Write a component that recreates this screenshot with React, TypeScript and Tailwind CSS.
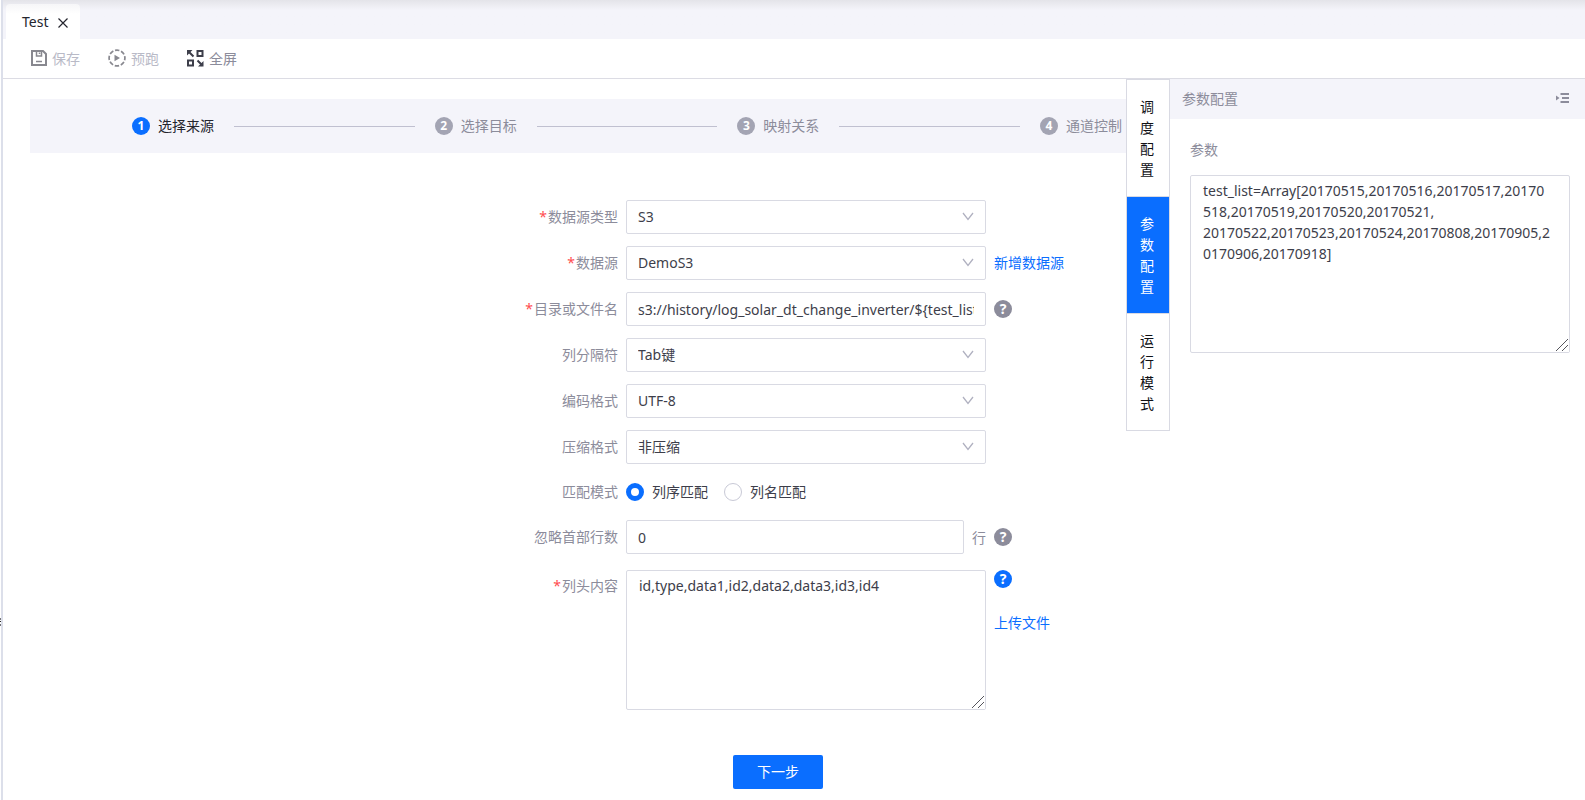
import React, { useState } from "react";

const STEPS = ["选择来源", "选择目标", "映射关系", "通道控制"];
const SIDE_TABS = ["调度配置", "参数配置", "运行模式"];

const PARAMS =
  "test_list=Array[20170515,20170516,20170517,20170518,20170519,20170520,20170521,\n20170522,20170523,20170524,20170808,20170905,20170906,20170918]";

const boxClass =
  "block border border-[#d9dae3] rounded-xs bg-white text-[#3d3e4a] outline-none focus:border-[#0a6eff]";

function SaveIcon() {
  return (
    <svg width="16" height="16" viewBox="0 0 16 16" fill="none" stroke="#88888f" strokeWidth="2">
      <path d="M1 1h11l3 3v11H1z" />
      <path d="M5.500 1v5h5V1M8.500 2.500v1.500M5 11.500h6" strokeWidth="1.500" />
    </svg>
  );
}

function PreRunIcon() {
  return (
    <svg width="18" height="18" viewBox="0 0 18 18" fill="none">
      <circle cx="9" cy="9" r="7.900" stroke="#88888f" strokeWidth="1.700" strokeDasharray="4.400 1.800" strokeDashoffset="2.200" />
      <path d="M6.500 5.700v6.600L12 9z" fill="#88888f" />
    </svg>
  );
}

function FullScreenIcon() {
  return (
    <svg width="17" height="17" viewBox="0 0 17 17" fill="none" stroke="#3d3e4a" strokeWidth="2">
      <path d="M10.500 1h5v5h-5zM1 10.500h5v5H1z" />
      <path d="M1.500 1.500l5 5M10.500 10.500l5 5" />
      <path d="M0 0h5.500L0 5.500zM16.500 11v5.500H11z" fill="#3d3e4a" stroke="none" />
    </svg>
  );
}

function Chevron() {
  return (
    <svg
      className="absolute right-3 top-3 pointer-events-none"
      width="12"
      height="9"
      viewBox="0 0 12 9"
      fill="none"
      stroke="#b0b1c0"
      strokeWidth="1.300"
    >
      <path d="M1 1l5 6.500L11 1" />
    </svg>
  );
}

function Help({ active }: { active?: boolean }) {
  return (
    <button
      type="button"
      aria-label="帮助"
      className={
        active
          ? "w-[18px] h-[18px] rounded-full bg-[#0a6eff] text-white text-sm leading-[18px] font-bold text-center shrink-0"
          : "w-[18px] h-[18px] rounded-full bg-[#8c8c9b] text-white text-sm leading-[18px] font-bold text-center shrink-0"
      }
    >
      ?
    </button>
  );
}

function Label({ id, text, required }: { id?: string; text: string; required?: boolean }) {
  return (
    <label htmlFor={id} className="block w-[100px] pb-0.5 shrink-0 text-right text-[#8c8c9b] whitespace-nowrap">
      {required && <span className="text-[#ff4d4f] mr-px">*</span>}
      {text}
    </label>
  );
}

function SelectRow(props: { id: string; label: string; value: string; required?: boolean; children?: React.ReactNode }) {
  return (
    <div className="flex items-center gap-2 mb-3">
      <Label id={props.id} text={props.label} required={props.required} />
      <div className="relative w-[360px] shrink-0">
        <select id={props.id} className={`${boxClass} appearance-none w-full h-[34px] px-[11px] pb-0.5`}>
          <option>{props.value}</option>
        </select>
        <Chevron />
      </div>
      {props.children}
    </div>
  );
}

function TextArea({ id, value, className }: { id: string; value: string; className: string }) {
  return (
    <div className="relative shrink-0">
      <textarea id={id} className={`${boxClass} ${className} pl-3 pr-[18px] py-1 break-all resize`} defaultValue={value} />
      <svg
        className="absolute right-px bottom-px pointer-events-none bg-white"
        width="15"
        height="15"
        viewBox="0 0 15 15"
        stroke="#55555c"
      >
        <path d="M2 14L14 2M8 14l6-6" />
      </svg>
    </div>
  );
}

export default function App() {
  const [mode, setMode] = useState("index");
  const [tab, setTab] = useState(1);

  return (
    <div
      className="min-h-screen flex text-sm leading-[21px] bg-white overflow-hidden"
      style={{ fontFamily: '"Noto Sans", "Noto Sans CJK SC", sans-serif' }}
    >
      <div className="w-px shrink-0 pt-[618px]">
        <svg width="1" height="8" viewBox="0 0 1 8" className="block">
          <path d="M0 0h1v2H0zM0 6h1v2H0z" fill="#77777c" />
          <path d="M0 3h1v1H0z" fill="#222" />
        </svg>
      </div>
      <div className="w-0.5 shrink-0 bg-[#dcdfea]"></div>
      <div className="flex-1 min-w-0 flex flex-col">
        <div className="h-[39px] shrink-0 flex items-end pl-[3px] bg-linear-to-b from-[#e4e4e9] to-[#f4f4fa] to-[10px]">
          <div className="h-[35px] flex items-center gap-2.5 pl-4 pr-3 rounded-t bg-linear-to-b from-[#f6f6f8] to-white to-[10px] text-[#24252e]">
            <span>Test</span>
            <button type="button" aria-label="关闭">
              <svg width="10" height="10" viewBox="0 0 10 10" stroke="#24252e" strokeWidth="1.200" className="mt-0.5">
                <path d="M.5.5l9 9M9.500.5l-9 9" />
              </svg>
            </button>
          </div>
        </div>

        <div className="h-10 shrink-0 flex items-center gap-7 pl-7 pb-px border-b border-[#dcdce4]">
          <button type="button" className="flex items-center gap-[5px] text-[#b9bac7]">
            <SaveIcon />
            保存
          </button>
          <button type="button" className="flex items-center gap-[5px] text-[#b9bac7]">
            <PreRunIcon />
            预跑
          </button>
          <button type="button" className="flex items-center gap-[5px] text-[#8c8c9b]">
            <FullScreenIcon />
            全屏
          </button>
        </div>

        <div className="flex-1 flex">
          <main className="flex-1 min-w-0 pl-[27px] pt-5">
            <ol className="h-[54px] flex items-center bg-[#f4f4fa] pl-[102px] pr-1">
              {STEPS.map((s, i) => (
                <li key={s} className={i < 3 ? "flex flex-1 items-center" : "flex items-center"}>
                  <span
                    className={
                      i === 0
                        ? "w-[18px] h-[18px] rounded-full bg-[#0a6eff] text-white text-xs leading-[18px] font-bold text-center shrink-0"
                        : "w-[18px] h-[18px] rounded-full bg-[#a3a4b3] text-white text-xs leading-[18px] font-bold text-center shrink-0"
                    }
                  >
                    {i + 1}
                  </span>
                  <span
                    className={
                      i === 0
                        ? "ml-2 pb-0.5 text-[#24252e] whitespace-nowrap"
                        : "ml-2 pb-0.5 text-[#8c8c9b] whitespace-nowrap"
                    }
                  >
                    {s}
                  </span>
                  {i < 3 && <span className="flex-1 h-px mx-5 bg-[#c0c0d0]"></span>}
                </li>
              ))}
            </ol>

            <form className="w-[546px] ml-auto mr-[62px] pt-[47px]" onSubmit={(e) => e.preventDefault()}>
              <SelectRow id="type" label="数据源类型" value="S3" required />
              <SelectRow id="source" label="数据源" value="DemoS3" required>
                <a href="#" className="pb-0.5 text-[#0a6eff] whitespace-nowrap">新增数据源</a>
              </SelectRow>
              <div className="flex items-center gap-2 mb-3">
                <Label id="path" text="目录或文件名" required />
                <input
                  id="path"
                  className={`${boxClass} w-[360px] h-[34px] px-[11px]`}
                  defaultValue="s3://history/log_solar_dt_change_inverter/${test_list}"
                />
                <Help />
              </div>
              <SelectRow id="separator" label="列分隔符" value="Tab键" />
              <SelectRow id="encoding" label="编码格式" value="UTF-8" />
              <SelectRow id="compress" label="压缩格式" value="非压缩" />

              <div className="flex items-center gap-2 h-8 mb-3" role="radiogroup" aria-label="匹配模式">
                <span className="w-[100px] pb-0.5 text-right text-[#8c8c9b]">匹配模式</span>
                <label className="flex items-center gap-2 mr-2 text-[#3d3e4a]">
                  <input
                    type="radio"
                    name="mode"
                    checked={mode === "index"}
                    onChange={() => setMode("index")}
                    className="appearance-none w-[18px] h-[18px] rounded-full border border-[#c8c9d6] checked:border-5 checked:border-[#0a6eff]"
                  />
                  <span className="pb-0.5">列序匹配</span>
                </label>
                <label className="flex items-center gap-2 text-[#3d3e4a]">
                  <input
                    type="radio"
                    name="mode"
                    checked={mode === "name"}
                    onChange={() => setMode("name")}
                    className="appearance-none w-[18px] h-[18px] rounded-full border border-[#c8c9d6] checked:border-5 checked:border-[#0a6eff]"
                  />
                  <span className="pb-0.5">列名匹配</span>
                </label>
              </div>

              <div className="flex items-center gap-2 mb-4">
                <Label id="skip" text="忽略首部行数" />
                <input id="skip" className={`${boxClass} w-[338px] h-[34px] px-[11px]`} defaultValue="0" />
                <span className="text-[#8c8c9b]">行</span>
                <Help />
              </div>

              <div className="flex gap-2">
                <div className="pt-[5px]">
                  <Label id="head" text="列头内容" required />
                </div>
                <TextArea id="head" className="w-[360px] h-[140px]" value="id,type,data1,id2,data2,data3,id3,id4" />
                <div className="flex flex-col items-start gap-6">
                  <Help active />
                  <a href="#" className="text-[#0a6eff] whitespace-nowrap">上传文件</a>
                </div>
              </div>

              <button
                type="submit"
                className="block w-[90px] h-[34px] pb-0.5 mt-[45px] ml-[215px] rounded-xs bg-[#0a6eff] text-white"
              >
                下一步
              </button>
            </form>
          </main>

          <aside className="flex shrink-0 items-start">
            <div className="w-11 border border-[#d9dae3] divide-y divide-[#d9dae3]">
              {SIDE_TABS.map((t, i) => (
                <button
                  key={t}
                  type="button"
                  onClick={() => setTab(i)}
                  className={
                    i === tab
                      ? "block w-full px-[13px] py-4 bg-[#0a6eff] text-white text-left break-all"
                      : "block w-full px-[13px] py-4 bg-white text-[#101116] text-left break-all"
                  }
                >
                  {t}
                </button>
              ))}
            </div>
            <section className="w-[415px]">
              <div className="h-10 flex items-center justify-between pl-3 pr-4 pb-0.5 bg-[#f4f4fa] text-[#8c8c9b]">
                <h2>参数配置</h2>
                <button type="button" aria-label="收起">
                  <svg width="13" height="10" viewBox="0 0 13 10" fill="#8c8c9b">
                    <path d="M0 2.500v5L3.500 5zM4.500 0H13v2H4.500zM6 4h7v2H6zM4.500 8H13v2H4.500z" />
                  </svg>
                </button>
              </div>
              <div className="pl-5 pr-[15px] pt-5">
                <label htmlFor="params" className="block mb-[15px] text-[#8c8c9b]">参数</label>
                <TextArea id="params" className="w-full h-[178px]" value={PARAMS} />
              </div>
            </section>
          </aside>
        </div>
      </div>
    </div>
  );
}
